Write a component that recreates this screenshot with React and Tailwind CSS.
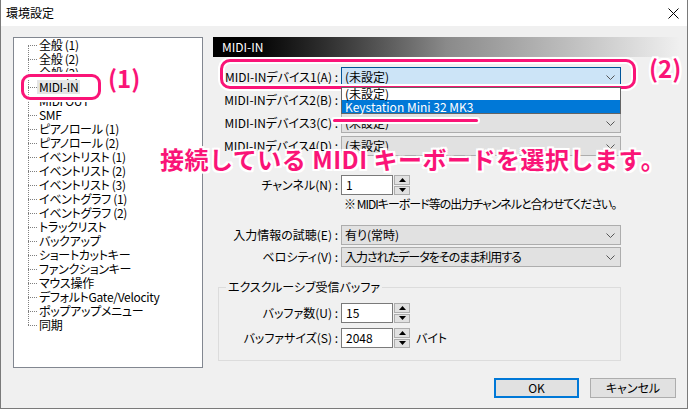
import React from 'react';

const treeItems = [
  '全般 (1)', '全般 (2)', '全般 (3)', 'MIDI-IN', 'MIDI OUT', 'SMF',
  'ピアノロール (1)', 'ピアノロール (2)', 'イベントリスト (1)', 'イベントリスト (2)',
  'イベントリスト (3)', 'イベントグラフ (1)', 'イベントグラフ (2)', 'トラックリスト',
  'バックアップ', 'ショートカットキー', 'ファンクションキー', 'マウス操作',
  'デフォルトGate/Velocity', 'ポップアップメニュー', '同期',
];

const halo =
  '[text-shadow:2px_0_0_#fff,-2px_0_0_#fff,0_2px_0_#fff,0_-2px_0_#fff,2px_2px_0_#fff,-2px_-2px_0_#fff,2px_-2px_0_#fff,-2px_2px_0_#fff,0_0_3px_#fff]';

function Chevron() {
  return (
    <svg width="9" height="5" viewBox="0 0 9 5" className="shrink-0">
      <polyline points="0.5,0.5 4.5,4.5 8.5,0.5" fill="none" stroke="#555" strokeWidth="1" />
    </svg>
  );
}

function Combo({ value, focused, tight }) {
  return (
    <div
      className={
        'w-[280px] h-[20px] flex items-center justify-between pl-[3px] pr-[5px] border ' +
        (focused ? 'bg-[#cce4f7] border-[#005499]' : 'bg-[#e1e1e1] border-[#adadad]')
      }
    >
      <span className={'whitespace-nowrap ' + (tight ? 'tracking-[-1px]' : '')}>{value}</span>
      <Chevron />
    </div>
  );
}

function Arrow({ up }) {
  return (
    <svg width="7" height="4" viewBox="0 0 7 4">
      <polygon points={up ? '3.5,0 7,4 0,4' : '0,0 7,0 3.5,4'} fill="#000" />
    </svg>
  );
}

function Spin({ value }) {
  return (
    <div className="flex h-[20px]">
      <div className="w-[52px] h-full bg-white border border-[#7a7a7a] pl-[4px] flex items-center">
        {value}
      </div>
      <div className="w-[17px] h-full flex flex-col gap-[1px] pl-[1px]">
        <div className="flex-1 bg-[#e1e1e1] border border-[#adadad] flex items-center justify-center">
          <Arrow up />
        </div>
        <div className="flex-1 bg-[#e1e1e1] border border-[#adadad] flex items-center justify-center">
          <Arrow />
        </div>
      </div>
    </div>
  );
}

function Row({ label, children, className = '', labelWidth = 'w-[128px]' }) {
  return (
    <div className={'flex items-center h-[20px] ' + className}>
      <div className={labelWidth + ' shrink-0 pr-[3px] text-right whitespace-nowrap'}>{label}</div>
      {children}
    </div>
  );
}

export default function App() {
  return (
    <div className="w-[690px] h-[410px] bg-white overflow-hidden">
      <div
        className="relative w-[688px] h-[409px] bg-[#f0f0f0] border-l border-r border-b border-[#7a7a7a] text-[12px] text-black [font-family:'Noto_Sans_CJK_JP','Noto_Sans',sans-serif] [font-feature-settings:'palt']"
      >
        {/* title bar */}
        <div className="h-[26px] bg-white flex items-center justify-between pl-[5px] pr-[8px]">
          <span>環境設定</span>
          <svg width="11" height="11" viewBox="0 0 11 11">
            <path d="M0.5 0.5 L10.5 10.5 M10.5 0.5 L0.5 10.5" stroke="#000" strokeWidth="1" />
          </svg>
        </div>

        <div className="flex gap-[10px] pl-[12px] pt-[11px]">
          {/* tree */}
          <div className="w-[190px] h-[331px] bg-white border border-[#828790]">
            <div className="relative pl-[14px] leading-[14px]">
              <div className="absolute left-[14px] top-[7px] bottom-[7px] border-l border-dotted border-[#7f7f7f]" />
              {treeItems.map((t) => (
                <div key={t} className="flex items-center h-[14px]">
                  <span className="w-[9px] border-t border-dotted border-[#7f7f7f]" />
                  <span className={'px-[2px] whitespace-nowrap tracking-[-0.3px] ' + (t === 'MIDI-IN' ? 'bg-[#e5e5e5]' : '')}>{t}</span>
                </div>
              ))}
            </div>
          </div>

          {/* right panel */}
          <div className="w-[467px] flex flex-col">
            <div className="h-[20px] flex items-center pl-[9px] text-white bg-gradient-to-r from-black via-[#8a8a8a] to-[#f0f0f0]">
              MIDI-IN
            </div>

            <Row label="MIDI-INデバイス1(A) :" className="mt-[10px]">
              <div className="relative">
                <Combo value="(未設定)" focused />
                <div className="absolute left-0 top-full w-[280px] bg-white border border-[#646464] leading-[12px] z-10">
                  <div className="h-[12px] pl-[3px]">(未設定)</div>
                  <div className="h-[13px] pl-[3px] bg-[#0078d7] text-white flex items-center">Keystation Mini 32 MK3</div>
                </div>
              </div>
            </Row>
            <Row label="MIDI-INデバイス2(B) :" className="mt-[3px]">
              <Combo value="(未設定)" />
            </Row>
            <Row label="MIDI-INデバイス3(C) :" className="mt-[3px]">
              <Combo value="(未設定)" />
            </Row>
            <Row label="MIDI-INデバイス4(D) :" className="mt-[3px]">
              <Combo value="(未設定)" />
            </Row>

            <Row label="チャンネル(N) :" className="mt-[19px]">
              <Spin value="1" />
            </Row>
            <div className="mt-[2px] h-[14px] leading-[14px] ml-[131px] whitespace-nowrap tracking-[-1px]">
              ※ MIDIキーボード等の出力チャンネルと合わせてください。
            </div>

            <Row label="入力情報の試聴(E) :" className="mt-[14px]">
              <Combo value="有り(常時)" />
            </Row>
            <Row label="ベロシティ(V) :" className="mt-[2px]">
              <Combo value="入力されたデータをそのまま利用する" tight />
            </Row>

            <fieldset className="mt-[13px] ml-[5px] w-[403px] border border-[#dcdcdc] pb-[12px]">
              <legend className="ml-[7px] px-[2px] h-[14px] leading-[14px]">エクスクルーシブ受信バッファ</legend>
              <Row label="バッファ数(U) :" labelWidth="w-[122px]" className="mt-[9px]">
                <Spin value="15" />
              </Row>
              <Row label="バッファサイズ(S) :" labelWidth="w-[122px]" className="mt-[5px]">
                <Spin value="2048" />
                <span className="ml-[6px]">バイト</span>
              </Row>
            </fieldset>

            <div className="mt-[17px] flex justify-end gap-[11px] pr-[4px]">
              <button className="w-[85px] h-[20px] bg-[#e1e1e1] border-2 border-[#0078d7] flex items-center justify-center">
                OK
              </button>
              <button className="w-[86px] h-[20px] bg-[#e1e1e1] border border-[#adadad] flex items-center justify-center">
                キャンセル
              </button>
            </div>
          </div>
        </div>

        {/* annotations */}
        <div className="absolute left-[20px] top-[74px] w-[80px] h-[26px] rounded-[9px] border-[3px] border-[#fa1477] shadow-[0_0_0_2px_#fff,inset_0_0_0_2px_#fff]" />
        <div className={'absolute left-[107px] top-[66px] text-[24px] leading-none font-bold text-[#fa1477] [font-feature-settings:normal] ' + halo}>
          (1)
        </div>
        <div className="absolute left-[219px] top-[59px] w-[416px] h-[30px] rounded-[10px] border-[3px] border-[#fa1477] shadow-[0_0_0_2px_#fff,inset_0_0_0_2px_#fff]" />
        <div className={'absolute left-[648px] top-[56px] text-[24px] leading-none font-bold text-[#fa1477] [font-feature-settings:normal] ' + halo}>
          (2)
        </div>
        <div className="absolute left-[332px] top-[119px] w-[145px] h-[3px] rounded-full bg-[#fa1477] shadow-[0_0_0_2px_#fff]" />
        <div className={'absolute left-[159px] top-[147px] text-[24px] tracking-[0.5px] leading-none font-bold whitespace-nowrap text-[#fa1477] [font-feature-settings:normal] ' + halo}>
          接続している MIDI キーボードを選択します。
        </div>
      </div>
    </div>
  );
}
